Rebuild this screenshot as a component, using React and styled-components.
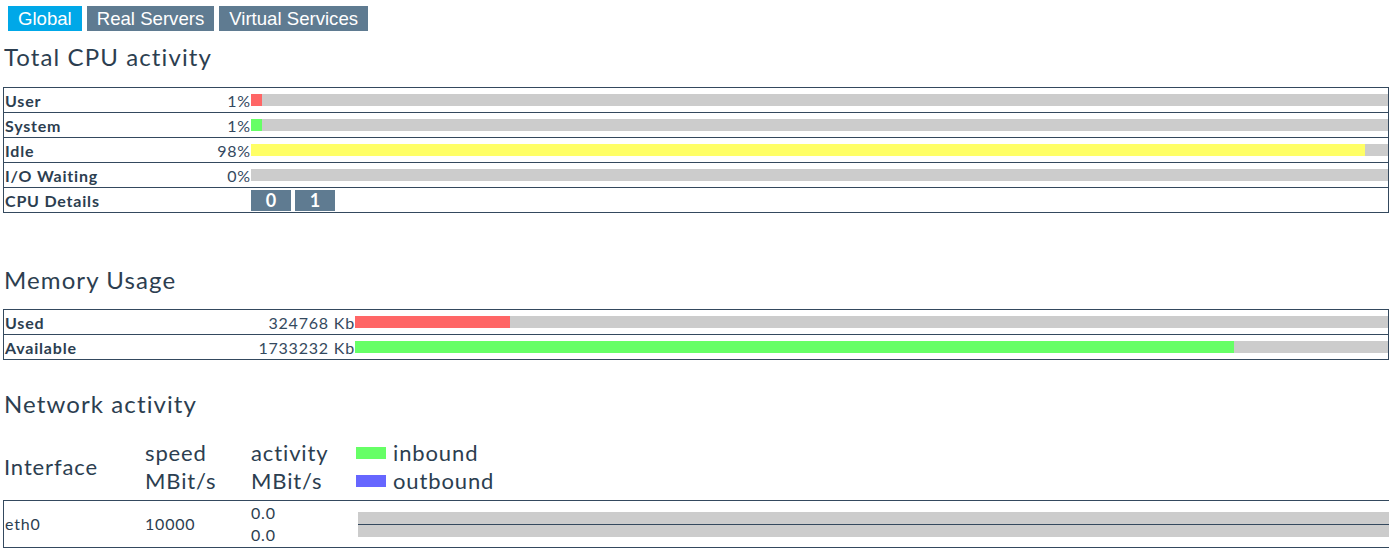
import React from "react";
import styled, { createGlobalStyle } from "styled-components";

const Global = createGlobalStyle`
  html, body { margin: 0; padding: 0; background: #fff; }
  body { font-family: Lato, "Noto Sans", sans-serif; color: #2c3e50; overflow: hidden; letter-spacing: 0.05em; }
`;

const Page = styled.div`
  padding: 6px 0 0 3px;
  width: 1386px;
`;

const Tabs = styled.div`
  display: flex;
  gap: 5px;
  margin-left: 5px;
`;

const Tab = styled.div`
  height: 25px;
  line-height: 25px;
  padding: 0 10px;
  font-family: "Liberation Sans", Arial, sans-serif;
  font-size: 18.6px;
  letter-spacing: 0;
  color: #fff;
  background: ${(p) => (p.$active ? "#00a8e8" : "#5f7b91")};
`;

const Heading = styled.h2`
  margin: ${(p) => p.$m || "0"};
  padding-left: 1px;
  font-size: 24px;
  font-weight: 400;
  line-height: 30px;
  letter-spacing: 0.046em;
  color: #2c3e50;
`;

const Table = styled.div`
  border: 1px solid #34495e;
  border-right: ${(p) => (p.$open ? "none" : "1px solid #34495e")};
  width: ${(p) => (p.$open ? "1387px" : "auto")};
  box-sizing: border-box;
  margin-bottom: ${(p) => p.$mb || "0"};
`;

const Row = styled.div`
  display: grid;
  grid-template-columns: ${(p) => p.$cols};
  align-items: center;
  height: 24px;
  & + & { border-top: 1px solid #34495e; }
`;

const Label = styled.div`
  padding-left: 1px;
  font-size: 16px;
  font-weight: 700;
  white-space: nowrap;
`;

const Value = styled.div`
  text-align: right;
  font-size: 16px;
  white-space: nowrap;
  color: #34495e;
`;

const Track = styled.div`
  height: 12px;
  background: #cccccc;
  display: flex;
`;

const Fill = styled.div`
  height: 100%;
  background: ${(p) => p.$color};
`;

const Buttons = styled.div`
  display: flex;
  gap: 4px;
`;

const CpuButton = styled.div`
  width: 40px;
  height: 21px;
  line-height: 21px;
  text-align: center;
  font-size: 18px;
  font-weight: 700;
  letter-spacing: 0;
  color: #fff;
  background: #5f7b91;
`;

const NetHead = styled.div`
  display: grid;
  grid-template-columns: 141px 106px 105px 1fr;
  align-items: center;
  padding-left: 1px;
  margin-bottom: 5px;
  font-size: 22px;
  letter-spacing: 0.04em;
  line-height: 28px;
`;

const Legend = styled.div`
  display: flex;
  flex-direction: column;
`;

const LegendItem = styled.div`
  display: flex;
  align-items: center;
  gap: 7px;
`;

const Swatch = styled.span`
  width: 30px;
  height: 12px;
  background: ${(p) => p.$color};
`;

const NetRow = styled.div`
  display: grid;
  grid-template-columns: 141px 106px 107px 1fr;
  align-items: center;
  height: 46px;
  font-size: 16px;
`;

const Cell = styled.div`
  padding-left: ${(p) => p.$pl || "0"};
  line-height: 22px;
`;

const NetBar = styled.div`
  display: flex;
  flex-direction: column;
`;

const NetTrack = styled.div`
  height: 12px;
  background: #cccccc;
`;

const NetDivider = styled.div`
  height: 1px;
  background: #34495e;
`;

const cpu = [
  { label: "User", value: "1%", pct: 1, color: "#ff6666" },
  { label: "System", value: "1%", pct: 1, color: "#66ff66" },
  { label: "Idle", value: "98%", pct: 98, color: "#ffff66" },
  { label: "I/O Waiting", value: "0%", pct: 0, color: "#ff6666" },
];

const mem = [
  { label: "Used", value: "324768 Kb", pct: 15.0, color: "#ff6666" },
  { label: "Available", value: "1733232 Kb", pct: 85.1, color: "#66ff66" },
];

export default function App() {
  return (
    <>
      <Global />
      <Page>
        <Tabs>
          <Tab $active>Global</Tab>
          <Tab>Real Servers</Tab>
          <Tab>Virtual Services</Tab>
        </Tabs>

        <Heading $m="11px 0 15px">Total CPU activity</Heading>
        <Table $mb="52px">
          {cpu.map((r) => (
            <Row key={r.label} $cols="200px 47px 1fr">
              <Label>{r.label}</Label>
              <Value>{r.value}</Value>
              <Track>
                <Fill $color={r.color} style={{ width: `${r.pct}%` }} />
              </Track>
            </Row>
          ))}
          <Row $cols="200px 47px 1fr">
            <Label>CPU Details</Label>
            <div />
            <Buttons>
              <CpuButton>0</CpuButton>
              <CpuButton>1</CpuButton>
            </Buttons>
          </Row>
        </Table>

        <Heading $m="0 0 14px">Memory Usage</Heading>
        <Table $mb="29px">
          {mem.map((r) => (
            <Row key={r.label} $cols="231px 120px 1fr">
              <Label>{r.label}</Label>
              <Value>{r.value}</Value>
              <Track>
                <Fill $color={r.color} style={{ width: `${r.pct}%` }} />
              </Track>
            </Row>
          ))}
        </Table>

        <Heading $m="0 0 20px">Network activity</Heading>
        <NetHead>
          <div>Interface</div>
          <div>speed<br />MBit/s</div>
          <div>activity<br />MBit/s</div>
          <Legend>
            <LegendItem><Swatch $color="#66ff66" />inbound</LegendItem>
            <LegendItem><Swatch $color="#6666ff" />outbound</LegendItem>
          </Legend>
        </NetHead>
        <Table $open>
          <NetRow>
            <Cell $pl="1px">eth0</Cell>
            <Cell>10000</Cell>
            <Cell>0.0<br />0.0</Cell>
            <NetBar>
              <NetTrack />
              <NetDivider />
              <NetTrack />
            </NetBar>
          </NetRow>
        </Table>
      </Page>
    </>
  );
}
